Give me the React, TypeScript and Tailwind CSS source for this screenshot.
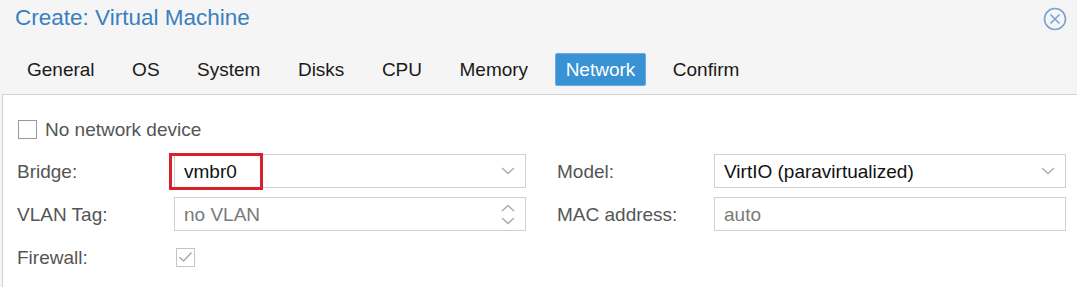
import React from "react";

const tabs = ["General", "OS", "System", "Disks", "CPU", "Memory", "Network", "Confirm"];

function Chevron({ up = false }: { up?: boolean }) {
  return (
    <svg width="14" height="8" viewBox="0 0 14 8" fill="none">
      <path
        d={up ? "M1 7 L7 1.5 L13 7" : "M1 1 L7 6.5 L13 1"}
        stroke="#a9a9a9"
        strokeWidth="1.3"
      />
    </svg>
  );
}

function Field({
  value,
  muted = false,
  trigger,
  children,
}: {
  value: string;
  muted?: boolean;
  trigger?: React.ReactNode;
  children?: React.ReactNode;
}) {
  return (
    <div className="relative flex-1 h-[34px] flex items-center border border-[#d0d0d0] bg-white">
      <span className={`flex-1 pl-[9px] ${muted ? "text-[#7a7a7a]" : "text-[#111]"}`}>{value}</span>
      {trigger && <div className="w-[34px] flex justify-center">{trigger}</div>}
      {children}
    </div>
  );
}

function Row({ label, children }: { label: string; children: React.ReactNode }) {
  return (
    <div className="flex items-center h-[34px]">
      <div className="w-[157px] text-[#555]">{label}</div>
      {children}
    </div>
  );
}

export default function App() {
  return (
    <div
      className="h-screen flex flex-col bg-[#f5f5f5] text-[19px] leading-none"
      style={{ fontFamily: '"Liberation Sans", Arial, sans-serif' }}
    >
      {/* Title bar */}
      <div className="h-[36px] flex items-center justify-between pl-[15px] pr-[10px]">
        <span className="text-[22.5px] text-[#3a7fc0]">Create: Virtual Machine</span>
        <svg width="24" height="24" viewBox="0 0 24 24" fill="none" className="mt-[2px]">
          <circle cx="12" cy="12" r="10.5" stroke="#7aa4d4" strokeWidth="1.6" />
          <path d="M7.5 7.5 L16.5 16.5 M16.5 7.5 L7.5 16.5" stroke="#7aa4d4" strokeWidth="1.6" />
        </svg>
      </div>

      {/* Tabs */}
      <div className="flex gap-[15.5px] pl-[16px] pt-[17px] pb-[8px]">
        {tabs.map((t) =>
          t === "Network" ? (
            <div
              key={t}
              className="h-[33px] px-[10px] flex items-center rounded-[2px] border border-[#6aaae3] bg-[#3892d4] text-white"
            >
              {t}
            </div>
          ) : (
            <div key={t} className="h-[33px] px-[10px] flex items-center border border-transparent text-[#1a1a1a]">
              {t}
            </div>
          )
        )}
      </div>

      {/* Body */}
      <div className="flex-1 ml-[2px] border-l border-t border-[#d0d0d0] bg-white pl-[14px] pr-[11px] pt-[17px] flex flex-col gap-[8px]">
        <div className="flex items-center h-[34px] gap-[8px]">
          <div className="w-[19px] h-[19px] ml-[1px] border border-[#9a9a9a] bg-white" />
          <span className="text-[#555]">No network device</span>
        </div>

        <div className="grid grid-cols-2 gap-x-[31px]">
          <div className="flex flex-col gap-[9px]">
            <Row label="Bridge:">
              <Field value="vmbr0" trigger={<Chevron />}>
                <div className="absolute -left-[6px] -top-[2px] w-[94px] h-[37px] border-[3px] border-[#d8212b]" />
              </Field>
            </Row>
            <Row label="VLAN Tag:">
              <Field
                value="no VLAN"
                muted
                trigger={
                  <div className="flex flex-col gap-[5px]">
                    <Chevron up />
                    <Chevron />
                  </div>
                }
              />
            </Row>
            <Row label="Firewall:">
              <div className="w-[19px] h-[19px] ml-[2px] border border-[#c4c4c4] flex items-center justify-center">
                <svg width="15" height="12" viewBox="0 0 15 12" fill="none">
                  <path d="M1.5 6 L5.5 10 L13.5 1.5" stroke="#a8a8a8" strokeWidth="1.4" />
                </svg>
              </div>
            </Row>
          </div>

          <div className="flex flex-col gap-[9px]">
            <Row label="Model:">
              <Field value="VirtIO (paravirtualized)" trigger={<Chevron />} />
            </Row>
            <Row label="MAC address:">
              <Field value="auto" muted />
            </Row>
          </div>
        </div>
      </div>
    </div>
  );
}
